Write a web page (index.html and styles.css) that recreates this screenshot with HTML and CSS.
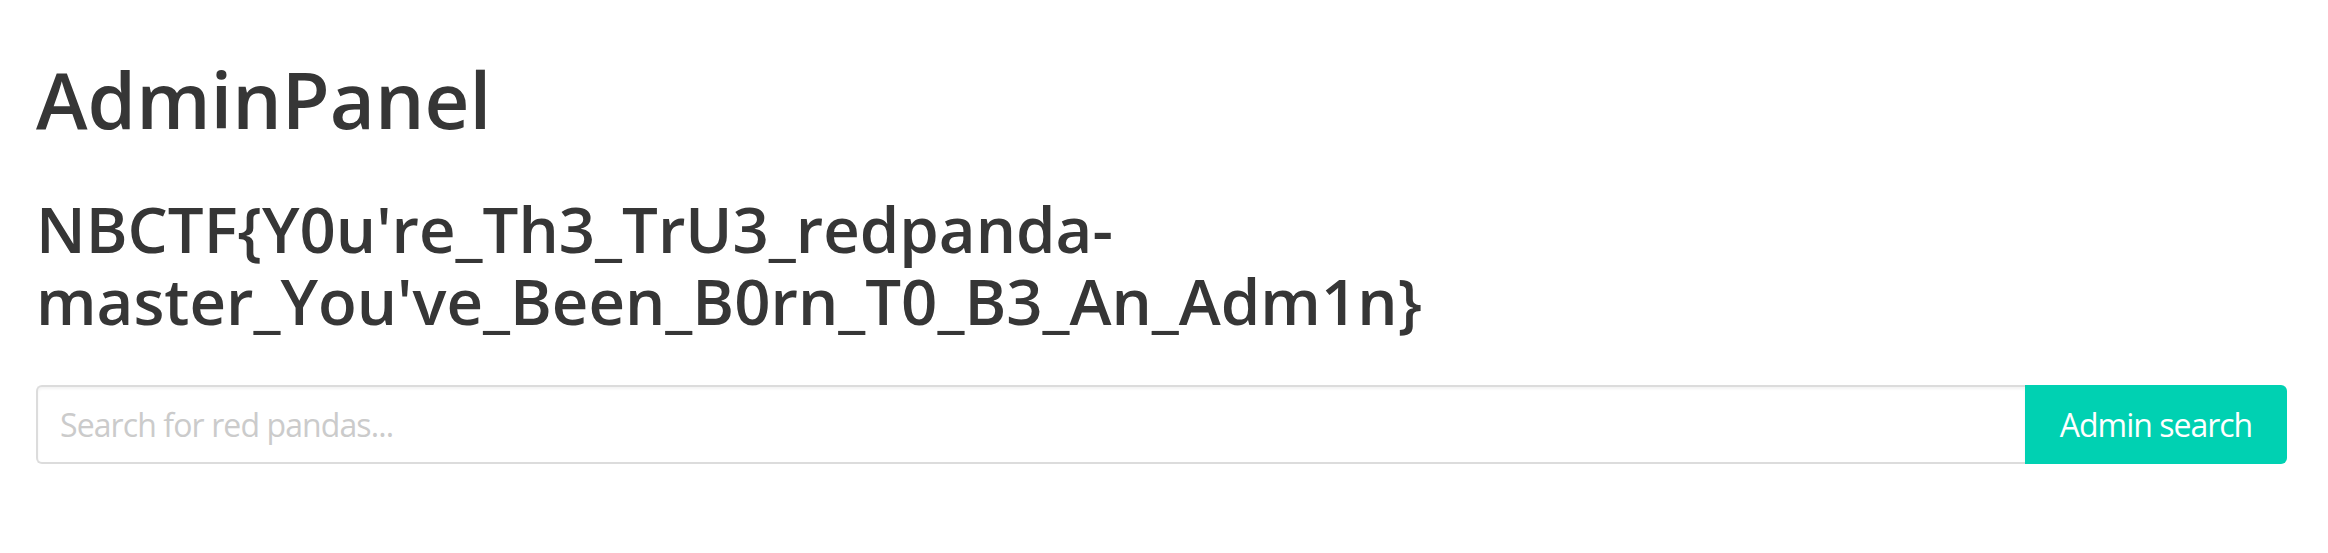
FILE: index.html
```html
<!DOCTYPE html>
<html lang="en">
<head>
<meta charset="utf-8">
<title>AdminPanel</title>
<link rel="stylesheet" href="styles.css">
</head>
<body>
<section class="section">
  <h1 class="title">AdminPanel</h1>
  <h2 class="flag">NBCTF{Y0u're_Th3_TrU3_redpanda-master_You've_Been_B0rn_T0_B3_An_Adm1n}</h2>
  <form class="search">
    <input class="search-input" type="text" placeholder="Search for red pandas...">
    <button class="search-button" type="button">Admin search</button>
  </form>
</section>
</body>
</html>
```
FILE: styles.css
```css
html, body {
  margin: 0;
  padding: 0;
  background: #ffffff;
}

body {
  font-family: "Open Sans", "Noto Sans", sans-serif;
  color: #363636;
}

.section {
  padding: 56px 41px 0 36px;
}

.title {
  margin: 0;
  font-size: 78px;
  line-height: 87.75px;
  font-weight: 600;
  color: #363636;
}

.flag {
  margin: 49px 0 0 0;
  font-size: 63.5px;
  line-height: 72px;
  font-weight: 600;
  color: #363636;
  letter-spacing: 0;
}

.search {
  display: flex;
  margin-top: 48px;
  height: 79px;
}

.search-input {
  flex: 1;
  min-width: 0;
  box-sizing: border-box;
  height: 79px;
  margin: 0;
  padding: 0 22px;
  border: 2px solid #dcdcdc;
  border-right: none;
  border-radius: 6px 0 0 6px;
  box-shadow: inset 0 2px 3px rgba(10, 10, 10, 0.05);
  font-family: "Open Sans", "Noto Sans", sans-serif;
  font-size: 32px;
  letter-spacing: -0.9px;
  color: #363636;
  outline: none;
}

.search-input::placeholder {
  color: #cbcbcb;
}

.search-button {
  box-sizing: border-box;
  height: 79px;
  width: 262px;
  margin: 0;
  padding: 0;
  border: none;
  border-radius: 0 6px 6px 0;
  background: #00d1b2;
  color: #ffffff;
  font-family: "Open Sans", "Noto Sans", sans-serif;
  font-size: 32px;
  font-weight: 400;
  letter-spacing: -1px;
  cursor: pointer;
}
```
